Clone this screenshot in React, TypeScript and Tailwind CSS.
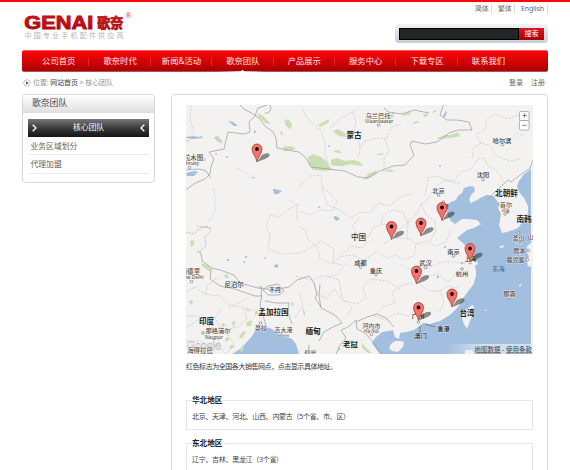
const navItems = ['公司首页', '歌奈时代', '新闻&活动', '歌奈团队', '产品展示', '服务中心', '下载专区', '联系我们'];

const pins = [
  [257, 162],
  [391.5, 239.5],
  [421, 236],
  [442, 220.5],
  [470, 261.5],
  [416.5, 284],
  [452, 307],
  [418.5, 320.5],
];

type Label = [string, number, number, number, string];
const labels: Label[] = [
  ['蒙古', 354, 138, 7.6, 'b'],
  ['中国', 358.5, 239.5, 7.6, 'n'],
  ['北朝鲜', 506.5, 196, 7.6, 'b'],
  ['南韩', 524, 222, 7.6, 'b'],
  ['印度', 206.5, 324, 7.6, 'b'],
  ['孟加拉国', 273.5, 315, 7.6, 'b'],
  ['缅甸', 313, 334, 7.6, 'b'],
  ['老挝', 350.5, 346.5, 7.4, 'b'],
  ['台湾', 467, 316, 7.6, 'b'],
  ['尼泊尔', 234, 286.5, 6.4, 'n'],
  ['不丹', 275, 292, 6, 'n'],
  ['乌兰巴托', 378, 118, 6.2, 'g'],
  ['Ulaanbaatar', 379, 123, 4.8, 'g'],
  ['拉木图', 193.5, 160, 6.4, 'g'],
  ['Almaty', 191, 165, 4.8, 'g'],
  ['哈尔滨', 502, 142.5, 6.2, 'n'],
  ['沈阳', 483, 177, 6.2, 'n'],
  ['北京', 438.5, 192.5, 6.2, 'n'],
  ['津', 446, 209, 6, 'n'],
  ['首尔', 506, 207, 6.2, 'g'],
  ['서울', 505.5, 212, 4.6, 'g'],
  ['成都', 360.5, 264.5, 6.2, 'n'],
  ['重庆', 376, 272.5, 6.2, 'n'],
  ['武汉', 425.5, 265, 6.2, 'n'],
  ['南京', 453.5, 254, 6.2, 'n'],
  ['上海', 470.5, 261, 6.2, 'n'],
  ['杭州', 462, 275.5, 6.2, 'n'],
  ['东海', 498.5, 271, 6.2, 's'],
  ['那霸', 509.5, 296, 6.2, 'g'],
  ['釜山', 518.5, 239.5, 6, 'g'],
  ['부산', 518.5, 244, 4, 'g'],
  ['山', 530.5, 238.5, 6, 'g'],
  ['熊本', 519.5, 252.5, 6, 'g'],
  ['鹿児島', 515.5, 262, 6, 'g'],
  ['新德里', 190.5, 274, 6.4, 'g'],
  ['New Delhi', 192, 279, 4.8, 'g'],
  ['那格浦尔', 218, 333, 6.2, 'g'],
  ['Nagpur', 214, 339, 5, 'g'],
  ['海得拉巴', 200, 353, 6.4, 'g'],
  ['豪拉', 261, 330, 6, 'g'],
  ['吉大港', 283.5, 331.5, 6, 'g'],
  ['চট্টগ্রাম', 283.5, 336.5, 4, 'g'],
  ['河内市', 371.5, 327.5, 6, 'g'],
  ['Hà Nội', 371.5, 332.5, 4.6, 'g'],
  ['香港', 443.5, 330.5, 6.2, 'k'],
  ['澳门', 420.5, 338, 6.2, 'k'],
  ['广州', 418, 318, 6.2, 'k'],
  ['仰光', 310.5, 355, 6, 'g'],
];

const towns = [
  [378.5, 125], [502.5, 144.5], [483, 179.5], [438.5, 195], [443.5, 202], [505, 214], [360.5, 267],
  [376, 274.5], [425.5, 267.5], [453.5, 256], [470, 262.5], [462, 269], [509, 298], [518.5, 233],
  [528.5, 250.5], [527.5, 259.5], [191.5, 281.5], [203, 333], [189.5, 167.5], [260.5, 323],
  [371.5, 334.5], [418.5, 322],
];

const fill: Record<string, string> = { b: '#222', n: '#383838', g: '#5e514c', s: '#4f70a8', k: '#111' };

function SalesMap() {
  return (
    <svg viewBox="186 105 347 249" className="block h-[249px] w-[347px]" fontFamily="'Noto Sans', 'Noto Sans CJK SC', sans-serif">
      <rect x="186" y="105" width="347" height="249" fill="#f3f2f0" />

      {/* seas */}
      <g fill="#a3bfdf">
        <path d="M445 203l3 1 3-2 5-2 2-4 4-3 2-5 6-2 4 1 1 4-4 4-2 5 2 3 6-3 5-3 5-2 7 1 3 5 3 3-2 4 3 6-1 6-1 5 3 8 5-1 6-2 5-2 3-4 5-6 2-5v-7l-4-8-5-6-2-6 2-5 5-7 7-5V354H380l-4-5-4-6 3-5 7-6 7-1 4-1 1 4 1 3 4 2 1-6 6-1 8-2 4-3 5-4 7 1 10-3 10-6 8-8 8-13 7-9 3-9 0-5-1-5 3-2-2-5-4-3-3-6-5-6-7-6 6-5 4-3 7-2 7-4-4-4-9-1-6 0-7 5-4-3-3-5z" />
        <path d="M232 354l8-5 5-5 8-9 3-6 6-2 8 1 8 5 6 1 3 3 5 2 4 5 3 10z" />
        <path d="M186 137l7-1 6 1 4-1-1 2-9 1-7-1zM228 121l5 1 5 4-4 0zM273 189l2 0 7 2-4 3-4 0zM186 173l9-2 3 1-4 4-7 0zM443 116l3-5 1 2-3 5zM285 122l5 1 1 4-5-1zM254 130l2 1-1 3-1-1zM333 217l3-1 4 3-4 2zM274 265l4-1 0 3-3 1zM214 137l5 1 2 5-4-2zM251 177l4 0-1 1.500z" />
      </g>
      <g stroke="#bdd0e6" strokeWidth=".5" fill="none">
        <path d="M213 188l2 8 0 16-8 12M236 168l9 3 6 8M346 263l-8 11-12 4M400 264l9 5 8-3 10 2 16-6 12 0 12 2M410 221l-12 9-2 8 13 1M500 146l8-5 9-8 8 3" />
      </g>
      <g fill="#a9c3e2">
        <circle cx="227" cy="157" r="1" />
        <circle cx="216" cy="154" r="1" />
        <circle cx="228" cy="260" r="1.2" />
        <circle cx="246" cy="257" r="1.2" />
        <circle cx="244" cy="262" r="1" />
        <circle cx="329" cy="146" r="1" />
        <circle cx="319" cy="207" r="1" />
        <circle cx="440" cy="166" r="1" />
        <circle cx="265" cy="258" r="1" />
        <circle cx="438" cy="277" r="1.3" />
        <circle cx="462" cy="263" r="1.3" />
        <circle cx="445" cy="247" r="1.2" />
      </g>
      {/* islands */}
      <g fill="#f3f2f0">
        <path d="M472 305l2 1-1 7-3 8-3 8-4-7-1-4 4-8z" />
        <path d="M391 344l4-3 6 0 3 1-1 5-5 5-6-1-3-3z" />
        <path d="M465 350l7 0 4 4h-11zM527 246l6-4v26l-3-2-2 1-1-6 2-5-2-3zM519 285l3-2-2 4zM484 311l3-2-1 2zM507 298l4-3-1 4zM499 247l4-2 1 2-3 1z" />
      </g>

      {/* forests */}
      <g fill="#c9dfb2">
        <path d="M308 157l5-3 8 3 6 5 5 8-8 1-11-1-4-6zM331 160l6-2 8 3 9-1 6 2 3 4-8-1-5-1-7 2-6 0-6-1zM363 180l5-6 9-4-1 4-9 5zM384 171l5-2 6 2-4 1zM258 113l4 2 8 8 0 1-5-1-6-6zM215 136l3 0 4 5 0 3-5-4zM318 125l5-3 6-3 0 3-8 5zM333 131l5-2 8 5 0 3-7-1-4-3zM333 151l6-1 3 3-4 0zM377 154l7-1-2 2-5 0zM387 116l7-3-1 5-5 1zM402 115l8-3 1 2-7 2zM413 122l5-1 1 2-5 1zM437 138l8-3 5 0 8-3 2 4-9 2-12 1zM423 115l4-2 1 3-4 1zM433 111l3-1 0 2-3 1zM284 121l4-2 4 5-1 5-3-1zM281 131l2 2-1 3-2-3zM283 147l7-1 6 2-3 2-9 1zM199 159l7-1 0 3-5 0zM201 263l6 2 6 5-4 1-7-5zM186 142l0-2 5 1z" />
        <path d="M190 241l4-1 0 5-3 2zM224 275l3-1 2 4-3 0zM233 280l6 2-2 3-3-3zM258 286l4 0 0 2-3 1zM190 300l3 1-1 4-3-2zM233 321l3 1-2 4-2-2zM240 335l4-4 2 1-4 6-3 0zM247 322l5-2-1 6-5 0zM223 323l3 2-3 2-2-2zM227 337l3 2-4 3-1-2zM232 345l4 1-5 3-2-2zM214 345l4-2 0 3-3 2zM240 351l2-4 2 0-2 5zM246 309l4 1-2 2zM254 314l3-4 1 4-3 1zM308 345l2 0 0 6-3 0zM349 340l4 3 3 5-2 2zM362 343l4 5 6 5-4 0-6-5zM338 347l3 2-3 2zM292 301l2 3-1 3-2-3zM303 308l2 4 0 5-2-4z" />
      </g>

      {/* provincial boundaries */}
      <g fill="none" stroke="#cbc9cc" strokeWidth=".7" strokeDasharray="2.500 1">
        <path d="M191 105l-1 15 4 12-4 8M303 109l4 9 7 7 7 5 4 14 0 12 4 8M331 128l10-10 12-6 4-4M353 112l3 10-2 10 5 8 1 12-3 6M360 148l5-7 12-3 9 1 6-12 9-3M385 139l4 12-5 8 0 14M391 125l-4-6 7-7M300 186l10-10 11-1 1 12 9 7 6 7-4 10-13-1-10 5-10-4M322 187l5 18 15 6 9 7 9-6 10 1 9-10 10 3 13-10 10-2M360 217l-8 9 5 8 12 3 4-9 11-4 9 2-1 12-8 6M381 224l2-8 9-6 11 2 5 11-1 14 9 7-2 12-11 4-7-5-9 3-10-6-14 8-11-5-13 2-7 7-12-5-3-13-9-7-3-9-7-4" />
        <path d="M416 244l12-3 7 5 11-4 5-13M407 223l9-8 5-11 8-7 6-9 10-8 9 1 7-9 10-3 7-10 6-1 4 8 9 5 6 10M421 204l5 11 9 6 1 10-6 10M472 158l2-10 7-5-5-9 9-4 1-9 9-7 12 5 11-4 12 6M479 143l10 2 9 12 12 4 10-2M425 196l3-18 10-2 12 6 10 1M416 268l10 9 12-3 10 8 8-9 10 3M412 283l-10 2-10 8 3 10-12 4-9 9 11 4 11-7 12 3 9-8M400 289l-13-8-16-2-8 8 3 11-9 6-15-4-8-11-8 10-10-6-2-11M416 268l3 15 9 8 12 0 4 11-5 11M440 291l7-5 11 2M300 253l10-5 11-7 13 8-1 14 9 2M290 200l7 6 0 15M300 204l-12 5-9 8-9-2-4 11 4 9-2 14 15 5 16-1" />
        <path d="M186 292l9-5 10 7 15 2 9 9 15 3 3 11-9 8-18 4-12-5-6-9-20-2M205 294l3-9 10-8M222 308l-7 10 6 12-3 12 7 12M234 325l-6 10 6 9-7 9M186 328l12-8 15 1M186 341l13 0 14 7M246 308l10 3 5 9M300 294l3 12-8 12M229 307l12-5 6-5M343 253l9-7 10 2 7-8M296 276l15 4 15-5 13 5 3 18 10 10-5 9" />
      </g>

      {/* country boundaries */}
      <path d="M186 232l8 2 5-5 8-3 4 5-6 6 1 9-6 5M197 226l14 2" fill="none" stroke="#aaa" strokeWidth=".7" strokeDasharray="2 1" />
      <g fill="none" stroke="#a09da2" strokeWidth=".75">
        <path d="M186 190l9-7 10-4 5-5 1-7 3-8-5-7 15-3 4-17 16 2 6-2-1-10 6-6 3-8 9-3 7-4 4-2M240 105l4 4 9 5 5 3M270 105l1 4-3 4-3 0M258 117l7 9 8 6 3 6 1 10 10 2 12 2 7 6 5 9 17 2 17 2 13 6 10 1 12-7 13-5 12-1 9-10-4-10 2-4 13 3 12-2 12-9 9-3 14 0-3-8-12-2-10 0-7-5 4-12 5-8M384 108l4 4 14 2 12-4 15 3M487 200l12-12 9-8 3 2 12-9 7-5 3-8" />
        <path d="M197 251l4 2 1 8 10 7 8 2 14 5 6 8 18 5 8 1 12 0 11-2 8-7 12-4 5 7 3 11-2 4 6 9M211 270l-1 9 10 7 15 3 20 7 6 0 1-9M186 170l13-1 7 2 5 7M263 290l5-4 10-2 6 7-5 4-11 0zM262 295l-2 9 3 12 3 9M265 301l11 2 13 0-1 10 4 11M320 284l-1 12 2 12 8 4 7 4 6 7-9 4-9 5-5 9M341 330l7-3 8-7 1 9 8 4 8 9 9 12M356 322l11-5 10-3 9 4 8 9M341 330l5 8-6 7-4 9" />
      </g>
      <path d="M425 324l10 3M420 326v7" stroke="#555" strokeWidth=".6" />

      {towns.map(([x, y], i) => (
        <circle key={i} cx={x} cy={y} r="1.3" fill="#fff" stroke="#777" strokeWidth=".7" />
      ))}
      <text x="187" y="350" fontSize="12" fontFamily="'Liberation Sans', sans-serif" fill="#fff" fillOpacity=".7" stroke="#999" strokeWidth=".5" strokeOpacity=".7" textLength="34" lengthAdjust="spacingAndGlyphs">
        Google
      </text>
      {labels.map(([text, x, y, size, kind], i) => (
        <text
          key={i}
          x={x}
          y={y}
          fontSize={size}
          textAnchor="middle"
          fill={fill[kind]}
          fontWeight={kind === 'b' ? 700 : 500}
          stroke={kind === 's' ? 'none' : '#fff'}
          strokeWidth=".8"
          strokeOpacity=".6"
          paintOrder="stroke"
        >
          {text}
        </text>
      ))}

      {pins.map(([x, y], i) => (
        <g key={i} transform={`translate(${x} ${y})`}>
          <path d="M0 0L5-7Q9-9.500 12-8.500Q14-6 9-3.500Q5-2 0 0Z" fill="#222" fillOpacity=".5" />
          <path d="M0 0C-.5-5-5-8-5-13a5 5 0 0 1 10 0C5-8 .5-5 0 0z" fill="#f8726a" stroke="#a0403a" strokeWidth=".8" />
          <circle cy="-13" r="1.9" fill="#111" />
        </g>
      ))}

      {/* zoom buttons */}
      <g fill="#fff" stroke="#999" strokeWidth=".7">
        <rect x="519.5" y="111.5" width="9.5" height="9" rx="1" />
        <rect x="519.5" y="120.5" width="9.5" height="9.5" rx="1" />
        <path d="M522.3 115.500h4.400M524.500 113.300v4.400M522.300 125.300h4.400" stroke="#555" />
      </g>
      <linearGradient id="credit">
        <stop offset="0" stopColor="#e5eef8" stopOpacity="0" />
        <stop offset=".4" stopColor="#e5eef8" stopOpacity=".7" />
      </linearGradient>
      <rect x="446" y="344" width="87" height="10" fill="url(#credit)" />
      <text x="532" y="351.7" fontSize="6.5" textAnchor="end" fill="#444">
        <tspan textDecoration="underline">地图数据</tspan> - <tspan textDecoration="underline">使用条款</tspan>
      </text>
    </svg>
  );
}

function Logo() {
  return (
    <svg viewBox="22 10 114 31" className="mt-2 h-[31px] w-[114px]">
      <linearGradient id="red" x2="0" y2="1">
        <stop stopColor="#e01b20" />
        <stop offset="1" stopColor="#98060b" />
      </linearGradient>
      <text x="24.3" y="28.9" fontSize="18" fontWeight="700" fontFamily="'Liberation Sans', sans-serif" textLength="69" lengthAdjust="spacingAndGlyphs" fill="url(#red)" stroke="#b50e13" strokeWidth=".9">
        GENAI
      </text>
      <text x="97.3" y="28.2" fontSize="14" fontWeight="900" fontFamily="'Noto Sans CJK SC', sans-serif" textLength="26" lengthAdjust="spacingAndGlyphs" fill="url(#red)" stroke="#b50e13" strokeWidth=".5">
        歌奈
      </text>
      <text x="125.5" y="17.5" fontSize="8" fontFamily="'Liberation Sans', sans-serif" fill="#e5343a">®</text>
      <text x="24.5" y="37.8" fontSize="7" fontFamily="'Noto Sans CJK SC', sans-serif" textLength="99" fill="#b5b5b5">
        中国专业手机配件供应商
      </text>
    </svg>
  );
}

function Region({ name, areas }: { name: string; areas: string }) {
  return (
    <fieldset className="h-[35px] w-[347px] border border-[#e6e6e6] px-[5px]">
      <legend className="h-[10px] text-[7.6px] leading-[10px] font-bold text-[#222]">{name}</legend>
      <p className="mt-[6px] text-[7px] leading-[12px] tracking-[-0.3px] text-[#444]">{areas}</p>
    </fieldset>
  );
}

export default function App() {
  return (
    <div className="h-[470px] w-[570px] overflow-hidden border-t-2 border-[#fb0505] bg-white font-['Noto_Sans','Noto_Sans_CJK_SC',sans-serif] text-[7px] text-[#666]">
      <div className="ml-[22px] w-[526px]">
        <header className="flex h-12 justify-between">
          <Logo />
          <div className="flex w-[153px] flex-col items-end">
            <div className="mt-[2px] flex h-[10px] items-center leading-[10px]">
              <a className="border-r border-[#ddd] pr-[2px]">简体</a>
              <a className="border-r border-[#ddd] pr-[2px] pl-[6px]">繁体</a>
              <a className="border-r border-[#ddd] pr-[3px] pl-[6px] tracking-[-0.1px]">English</a>
            </div>
            <div className="mt-[10px] flex h-[19px] w-[153px] rounded-sm bg-linear-to-b from-[#eef4f6] to-[#c3d1d7] p-1">
              <div className="h-[12px] flex-1 border border-black bg-[#252525]" />
              <button className="h-[12px] w-[25px] bg-linear-to-b from-[#df151a] to-[#a80308] text-[7px] leading-[12px] text-white">搜索</button>
            </div>
          </div>
        </header>

        <nav className="flex h-[22px] rounded-[2px] border-t border-b border-t-[#f55] border-b-[#a55] bg-linear-to-b from-[#fb0808] to-[#ad0002] pl-[6px] text-[8.3px] leading-[22px] text-[#ffe5e5]">
          {navItems.map((item, i) => (
            <a key={item} className="relative flex w-[61.4px] items-center justify-center whitespace-nowrap">
              {item}
              {i < 7 && <span className="absolute top-[7px] right-0 h-[8px] w-px bg-[#e8282b]" />}
              {i === 3 && (
                <span className="absolute bottom-[-1px] left-[6px] flex h-px w-[48px] justify-center bg-linear-to-r from-transparent via-white/80 to-transparent">
                  <span className="-mt-px h-[2px] w-[3px] rounded-t bg-white" />
                </span>
              )}
            </a>
          ))}
        </nav>

        <div className="flex h-[22px] items-center justify-between pr-[3px]">
          <div className="flex items-center">
            <svg viewBox="0 0 8 8" className="mr-[2px] ml-px h-2 w-2">
              <circle cx="4" cy="4" r="3.3" fill="#fff" stroke="#aaa" strokeWidth=".7" />
              <path d="M3 2.2L5.7 4 3 5.8z" fill="#555" />
            </svg>
            <span className="tracking-[-0.1px] whitespace-pre text-[#999]">位置: <span className="text-[#444]">网站首页</span>{' > '}核心团队</span>
          </div>
          <div className="flex gap-2"><a>登录</a><a>注册</a></div>
        </div>

        <div className="flex items-start gap-4">
          <aside className="h-[89px] w-[133px] overflow-hidden rounded-[4px] border border-[#d8d8d8]">
            <h2 className="h-[18px] border-b border-[#ddd] bg-linear-to-b from-white to-[#e0e0e0] pl-[9px] text-[8.8px] leading-[17px] text-[#444]">歌奈团队</h2>
            <ul className="px-[5px] pt-[6px] text-[7.8px]">
              <li className="flex h-[18px] items-center justify-between bg-linear-to-b from-[#777] via-[#3c3c3c] to-[#161616] px-[4px] text-white">
                <svg viewBox="0 0 5 8" className="h-2 w-[5px]"><path d="M.7.7L4 4 .7 7.3" fill="none" stroke="#fff" strokeWidth="1.3" /></svg>
                核心团队
                <svg viewBox="0 0 5 8" className="h-2 w-[5px]"><path d="M4.3.7L1 4l3.3 3.3" fill="none" stroke="#fff" strokeWidth="1.3" /></svg>
              </li>
              <li className="h-[18px] border-b border-[#eee] pl-[2.5px] leading-[19px]">业务区域划分</li>
              <li className="h-[19px] border-b border-[#eee] pl-[2.5px] leading-[19px]">代理加盟</li>
            </ul>
          </aside>

          <main className="h-[400px] w-[377px] rounded-[4px] border border-[#d8d8d8] pt-[10px] pl-[14px]">
            <SalesMap />
            <p className="h-[41px] pt-[6px] text-[7px] leading-[13px] tracking-[-0.45px] text-[#333]">红色标志为全国各大销售网点，点击显示具体地址。</p>
            <Region name="华北地区" areas="北京、天津、河北、山西、内蒙古（5个省、市、区）" />
            <div className="h-[8px]" />
            <Region name="东北地区" areas="辽宁、吉林、黑龙江（3个省）" />
          </main>
        </div>
      </div>
    </div>
  );
}
